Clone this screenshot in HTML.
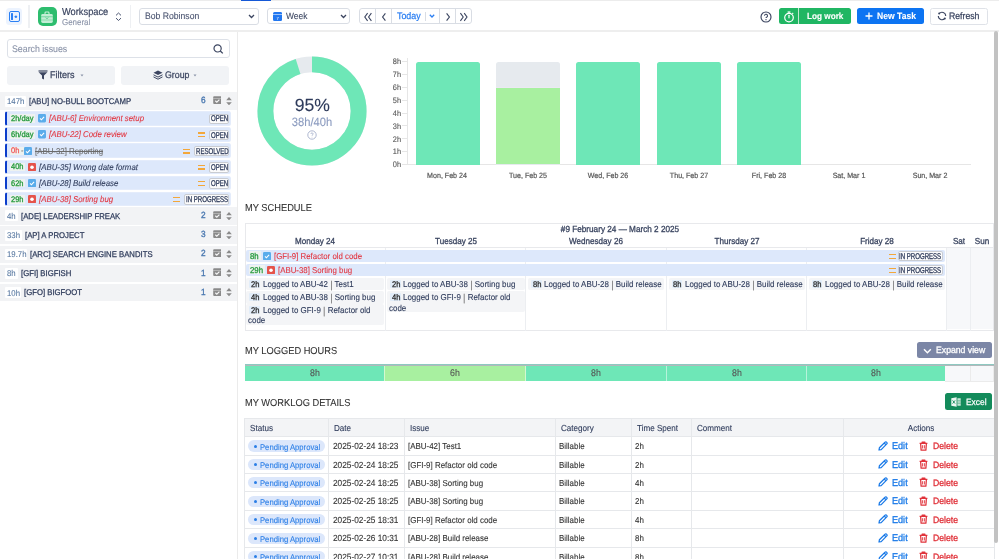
<!DOCTYPE html>
<html><head><meta charset="utf-8">
<style>
*{box-sizing:border-box;margin:0;padding:0}
html,body{width:999px;height:559px;overflow:hidden;background:#fff}
body{position:relative;font-family:"Liberation Sans",sans-serif;color:#333}
.a{position:absolute}
.t{position:absolute;white-space:nowrap;line-height:1;text-rendering:geometricPrecision;-webkit-text-stroke:0.1px currentColor}
svg{display:block}
#root{position:absolute;left:0;top:0;width:999px;height:559px;will-change:transform}
</style></head><body><div id="root">

<!-- HEADER -->
<div class="a" style="left:0.00px;top:0.00px;width:999.00px;height:1.00px;background:#ececec"></div>
<div class="a" style="left:241.00px;top:0.00px;width:30.00px;height:1.00px;background:#1558d6"></div>
<div class="a" style="left:0.00px;top:30.30px;width:999.00px;height:1.60px;background:#eeeeee"></div>
<div class="a" style="left:6.00px;top:8.00px;width:16.40px;height:16.60px;border-radius:3.5px;background:#ecf3fe"></div>
<div class="a" style="left:9.00px;top:10.90px;width:11.00px;height:11.20px;border:1.2px solid #2a80f4;border-radius:2px"></div>
<div class="a" style="left:10.90px;top:13.10px;width:1.90px;height:6.80px;background:#2a80f4;border-radius:0.5px"></div>
<svg class="a" style="left:13.80px;top:14.80px" width="4" height="3.6" viewBox="0 0 4 3.6"><path d="M0.2 1.8 L2 0.2 L3.4 1.8 L2 3.4Z" fill="#2a80f4"/></svg>
<div class="a" style="left:28.30px;top:4.80px;width:1.40px;height:23.40px;background:#eef0f3"></div>
<div class="a" style="left:37.50px;top:7.00px;width:19.30px;height:19.30px;border-radius:5px;background:#2dbd6e"></div>
<svg class="a" style="left:40.20px;top:9.70px" width="14" height="14" viewBox="0 0 14 14"><path d="M5 4 V2.9 a0.9 0.9 0 0 1 0.9 -0.9 h2.2 a0.9 0.9 0 0 1 0.9 0.9 V4" stroke="#c8f0d8" stroke-width="1.1" fill="none"/><rect x="1.2" y="4" width="11.6" height="8.9" rx="1.4" fill="#c2eed5"/><rect x="1.2" y="6.3" width="11.6" height="0.9" fill="#2dbd6e" opacity="0.55"/><rect x="1.2" y="9.6" width="11.6" height="0.8" fill="#2dbd6e" opacity="0.45"/><path d="M5.6 7.6 L7 8.7 L8.4 7.6" stroke="#2dbd6e" stroke-width="0.9" fill="none" opacity="0.7"/></svg>
<div class="t" style="left:62.00px;top:7.80px;font-size:10.044px;color:#3b4560;transform:scaleX(0.9259);transform-origin:0 0;-webkit-text-stroke:0.2px #3b4560">Workspace</div>
<div class="t" style="left:62.00px;top:17.60px;font-size:8.586px;color:#8a93a8;transform:scaleX(0.9259);transform-origin:0 0;">General</div>
<svg class="a" style="left:114.50px;top:12.00px" width="7" height="9.5" viewBox="0 0 7 9.5"><path d="M1 3.4 L3.5 1 L6 3.4 M1 6.1 L3.5 8.5 L6 6.1" stroke="#4a5470" stroke-width="1" fill="none"/></svg>
<div class="a" style="left:130.30px;top:4.80px;width:1.00px;height:23.40px;background:#eef0f3"></div>
<div class="a" style="left:139.20px;top:8.30px;width:119.40px;height:16.50px;border:1px solid #d9dde4;border-radius:3px"></div>
<div class="t" style="left:144.60px;top:12.20px;font-size:9.342px;color:#4a5470;transform:scaleX(0.9259);transform-origin:0 0;">Bob Robinson</div>
<svg class="a" style="left:247.50px;top:14.20px" width="7" height="5" viewBox="0 0 7 5"><path d="M1 1 L3.5 3.5 L6 1" stroke="#3b4560" stroke-width="1.3" fill="none"/></svg>
<div class="a" style="left:267.30px;top:8.10px;width:83.00px;height:16.20px;border:1px solid #d9dde4;border-radius:3px"></div>
<svg class="a" style="left:273.00px;top:12.30px" width="9.2" height="9" viewBox="0 0 9.2 9"><rect x="0" y="0" width="9.2" height="9" rx="1.5" fill="#2277f0"/><rect x="0" y="2.1" width="9.2" height="0.8" fill="#bcd6fb"/><text x="4.6" y="7.6" font-size="4.2" text-anchor="middle" fill="#fff" font-family="Liberation Sans">7</text></svg>
<div class="t" style="left:286.40px;top:12.40px;font-size:9.126px;color:#3b4560;transform:scaleX(0.9259);transform-origin:0 0;">Week</div>
<svg class="a" style="left:339.70px;top:14.20px" width="7" height="5" viewBox="0 0 7 5"><path d="M1 1 L3.5 3.5 L6 1" stroke="#3b4560" stroke-width="1.3" fill="none"/></svg>
<div class="a" style="left:359.10px;top:8.10px;width:112.80px;height:16.20px;border:1px solid #d9dde4;border-radius:3px"></div>
<div class="a" style="left:375.10px;top:8.10px;width:1.00px;height:16.20px;background:#d9dde4"></div>
<div class="a" style="left:391.20px;top:8.10px;width:1.00px;height:16.20px;background:#d9dde4"></div>
<div class="a" style="left:439.00px;top:8.10px;width:1.00px;height:16.20px;background:#d9dde4"></div>
<div class="a" style="left:454.90px;top:8.10px;width:1.00px;height:16.20px;background:#d9dde4"></div>
<div class="a" style="left:425.00px;top:11.50px;width:0.80px;height:9.50px;background:#d9dde4"></div>
<svg class="a" style="left:362.50px;top:11.50px" width="10" height="10" viewBox="0 0 10 10"><path d="M4.6 1.2 L1.8 5 L4.6 8.8 M8.4 1.2 L5.6 5 L8.4 8.8" stroke="#3b4560" stroke-width="1.1" fill="none"/></svg>
<svg class="a" style="left:379.80px;top:11.50px" width="8" height="10" viewBox="0 0 8 10"><path d="M5.4 1.3 L2.6 5 L5.4 8.7" stroke="#3b4560" stroke-width="1.15" fill="none"/></svg>
<div class="t" style="left:396.60px;top:12.40px;font-size:9.558px;color:#2a7ef2;transform:scaleX(0.9259);transform-origin:0 0;-webkit-text-stroke:0.25px #2a7ef2">Today</div>
<svg class="a" style="left:428.90px;top:14.30px" width="6" height="4" viewBox="0 0 6 4"><path d="M0.8 0.8 L3 3 L5.2 0.8" stroke="#2a7ef2" stroke-width="1.3" fill="none"/></svg>
<svg class="a" style="left:443.70px;top:11.50px" width="8" height="10" viewBox="0 0 8 10"><path d="M2.6 1.3 L5.4 5 L2.6 8.7" stroke="#3b4560" stroke-width="1.15" fill="none"/></svg>
<svg class="a" style="left:458.50px;top:11.50px" width="10" height="10" viewBox="0 0 10 10"><path d="M1.4 1.2 L4.2 5 L1.4 8.8 M5.2 1.2 L8 5 L5.2 8.8" stroke="#3b4560" stroke-width="1.1" fill="none"/></svg>
<svg class="a" style="left:759.80px;top:10.80px" width="12" height="12" viewBox="0 0 12 12"><circle cx="6" cy="6" r="5" stroke="#3b4560" stroke-width="1.15" fill="none"/><path d="M4.5 4.8 a1.5 1.5 0 1 1 2.1 1.35 c-0.45 0.2 -0.6 0.45 -0.6 0.95" stroke="#3b4560" stroke-width="1.05" fill="none"/><circle cx="6" cy="8.7" r="0.65" fill="#3b4560"/></svg>
<div class="a" style="left:779.10px;top:7.90px;width:71.90px;height:16.10px;border-radius:2.5px;background:#20b663"></div>
<div class="a" style="left:798.00px;top:7.90px;width:0.80px;height:16.10px;background:#bfe9cf"></div>
<svg class="a" style="left:782.60px;top:10.50px" width="12" height="12" viewBox="0 0 12 12"><circle cx="6" cy="6.6" r="4.3" stroke="#fff" stroke-width="1.2" fill="none"/><path d="M4.6 1 H7.4" stroke="#fff" stroke-width="1.2"/><path d="M6 1.2 V2.4" stroke="#fff" stroke-width="1.1"/><path d="M6 4.3 V6.8" stroke="#fff" stroke-width="1.2" stroke-linecap="round"/><path d="M9.3 2.9 L10.2 2" stroke="#fff" stroke-width="1.1"/></svg>
<div class="t" style="left:806.50px;top:11.60px;font-size:8.856px;color:#fff;transform:scaleX(0.9259);transform-origin:0 0;font-weight:bold">Log work</div>
<div class="a" style="left:857.20px;top:7.90px;width:66.40px;height:15.90px;border-radius:2.5px;background:#0d74f2"></div>
<svg class="a" style="left:865.40px;top:12.40px" width="8" height="8" viewBox="0 0 8 8"><path d="M4 0.5 V7.5 M0.5 4 H7.5" stroke="#fff" stroke-width="1.3"/></svg>
<div class="t" style="left:877.00px;top:11.60px;font-size:9.288px;color:#fff;transform:scaleX(0.9259);transform-origin:0 0;font-weight:bold">New Task</div>
<div class="a" style="left:930.20px;top:7.60px;width:58.30px;height:17.00px;border:1px solid #dfe2e8;border-radius:2.5px"></div>
<svg class="a" style="left:937.30px;top:10.90px" width="10" height="10" viewBox="0 0 10 10"><path d="M2.17 2.62 A3.7 3.7 0 0 1 8.70 5.00 M7.83 7.38 A3.7 3.7 0 0 1 1.30 5.00" stroke="#3b4560" stroke-width="1.1" fill="none"/><circle cx="2.17" cy="2.62" r="1" fill="#3b4560"/><circle cx="7.83" cy="7.38" r="1" fill="#3b4560"/></svg>
<div class="t" style="left:949.40px;top:11.40px;font-size:9.396px;color:#3b4560;transform:scaleX(0.9259);transform-origin:0 0;-webkit-text-stroke:0.25px #3b4560">Refresh</div>
<!-- SIDEBAR -->
<div class="a" style="left:237.00px;top:32.00px;width:1.00px;height:527.00px;background:#ebebeb"></div>
<div class="a" style="left:6.50px;top:38.50px;width:223.00px;height:19.00px;border:1px solid #dde1e8;border-radius:3px"></div>
<div class="t" style="left:12.00px;top:44.90px;font-size:9.504px;color:#8a93a8;transform:scaleX(0.9259);transform-origin:0 0;">Search issues</div>
<svg class="a" style="left:212.50px;top:43.50px" width="11" height="10" viewBox="0 0 11 10"><circle cx="4.6" cy="4.4" r="3.6" stroke="#3b4560" stroke-width="1.2" fill="none"/><path d="M7.3 7 L9.8 9.4" stroke="#3b4560" stroke-width="1.3"/></svg>
<div class="a" style="left:6.50px;top:65.50px;width:108.50px;height:19.00px;border-radius:3px;background:#f1f3f6"></div>
<div class="a" style="left:120.70px;top:65.50px;width:108.50px;height:19.00px;border-radius:3px;background:#f1f3f6"></div>
<svg class="a" style="left:38.00px;top:70.00px" width="10" height="10" viewBox="0 0 10 10"><path d="M0.5 0.4 H9.5 V1.6 H0.5Z" fill="#3b4560"/><path d="M0.6 2.2 H9.4 L6 5.4 V9.6 L4 8.6 V5.4Z" fill="#3b4560"/></svg>
<div class="t" style="left:50.00px;top:71.30px;font-size:9.72px;color:#3b4560;transform:scaleX(0.9259);transform-origin:0 0;-webkit-text-stroke:0.25px #3b4560">Filters</div>
<svg class="a" style="left:79.50px;top:74.00px" width="4" height="3" viewBox="0 0 4 3"><path d="M0.5 0.5 H3.5 L2 2.5Z" fill="#8a93a8"/></svg>
<svg class="a" style="left:153.00px;top:70.00px" width="10" height="10" viewBox="0 0 10 10"><path d="M5 0.5 L9.5 2.8 L5 5.1 L0.5 2.8Z" fill="#3b4560"/><path d="M0.5 4.8 L5 7.1 L9.5 4.8 M0.5 6.9 L5 9.2 L9.5 6.9" stroke="#3b4560" stroke-width="1" fill="none"/></svg>
<div class="t" style="left:165.00px;top:71.30px;font-size:9.504px;color:#3b4560;transform:scaleX(0.9259);transform-origin:0 0;-webkit-text-stroke:0.25px #3b4560">Group</div>
<svg class="a" style="left:192.50px;top:74.00px" width="4" height="3" viewBox="0 0 4 3"><path d="M0.5 0.5 H3.5 L2 2.5Z" fill="#8a93a8"/></svg>
<div class="a" style="left:0.00px;top:92.30px;width:237.00px;height:17.70px;background:#f2f3f5"></div>
<div class="a" style="left:5.00px;top:95.50px;width:20.50px;height:11.20px;background:#fff;border-radius:1px"></div>
<div class="t" style="left:7.00px;top:97.00px;font-size:8.424px;color:#5a7aa2;transform:scaleX(0.9259);transform-origin:0 0;">147h</div>
<div class="t" style="left:28.70px;top:96.90px;font-size:8.37px;color:#2d3a5a;transform:scaleX(0.9259);transform-origin:0 0;-webkit-text-stroke:0.25px #2d3a5a">[ABU] NO-BULL BOOTCAMP</div>
<div class="t" style="left:201.20px;top:96.20px;font-size:8.964px;color:#4a78b0;transform:scaleX(0.9259);transform-origin:0 0;-webkit-text-stroke:0.35px #4a78b0">6</div>
<svg class="a" style="left:212.60px;top:96.00px" width="8.6" height="8.2" viewBox="0 0 8.6 8.2"><rect x="0.2" y="0.2" width="8.2" height="7.8" rx="0.9" fill="#8a8a8a"/><rect x="0.2" y="2.1" width="8.2" height="0.5" fill="#d8d8d8"/><path d="M2.3 4.8 L3.8 6.2 L6.4 3.6" stroke="#f4f4f4" stroke-width="1.2" fill="none"/></svg>
<svg class="a" style="left:225.80px;top:96.70px" width="6" height="8.4" viewBox="0 0 6 8.4"><path d="M3 0.1 L5.8 3.2 H0.2Z M3 8.3 L5.8 5.2 H0.2Z" fill="#8a8a8a"/></svg>
<div class="a" style="left:4.60px;top:111.10px;width:226.20px;height:14.60px;background:#dde8fb;border-radius:2.5px;border:1px solid #e4ecfb;border-left:2.6px solid #0b3dcb"></div>
<div class="a" style="left:9.90px;top:114.30px;width:25.00px;height:8.60px;background:#eef2f0"></div>
<div class="t" style="left:11.40px;top:115.00px;font-size:8.1px;color:#22993a;transform:scaleX(0.9259);transform-origin:0 0;-webkit-text-stroke:0.3px #22993a">2h/day</div>
<svg class="a" style="left:37.70px;top:114.30px" width="8" height="8.4" viewBox="0 0 8 8.4"><rect x="0" y="0" width="8" height="8.4" rx="1.3" fill="#5aaceb"/><path d="M2 4.4 L3.4 5.8 L6.1 2.8" stroke="#fff" stroke-width="1.1" fill="none"/></svg>
<div class="t" style="left:48.80px;top:114.20px;font-size:8.478px;color:#e2343f;transform:scaleX(0.9259);transform-origin:0 0;font-style:italic">[ABU-6] Environment setup</div>
<div class="a" style="left:208.70px;top:113.50px;width:20.60px;height:10.70px;background:#fbfbfb;border:1px solid #c9ccd2;border-radius:2px"></div>
<div class="t" style="left:210.70px;top:114.40px;font-size:8.424px;color:#2d3a5a;transform:scaleX(0.7222);transform-origin:0 0;-webkit-text-stroke:0.3px #2d3a5a">OPEN</div>
<div class="a" style="left:4.60px;top:127.25px;width:226.20px;height:14.60px;background:#dde8fb;border-radius:2.5px;border:1px solid #e4ecfb;border-left:2.6px solid #0b3dcb"></div>
<div class="a" style="left:9.90px;top:130.45px;width:25.00px;height:8.60px;background:#eef2f0"></div>
<div class="t" style="left:11.40px;top:131.15px;font-size:8.1px;color:#22993a;transform:scaleX(0.9259);transform-origin:0 0;-webkit-text-stroke:0.3px #22993a">6h/day</div>
<svg class="a" style="left:37.70px;top:130.45px" width="8" height="8.4" viewBox="0 0 8 8.4"><rect x="0" y="0" width="8" height="8.4" rx="1.3" fill="#5aaceb"/><path d="M2 4.4 L3.4 5.8 L6.1 2.8" stroke="#fff" stroke-width="1.1" fill="none"/></svg>
<div class="t" style="left:48.80px;top:130.35px;font-size:8.478px;color:#e2343f;transform:scaleX(0.9259);transform-origin:0 0;font-style:italic">[ABU-22] Code review</div>
<div class="a" style="left:208.70px;top:129.65px;width:20.60px;height:10.70px;background:#fbfbfb;border:1px solid #c9ccd2;border-radius:2px"></div>
<div class="t" style="left:210.70px;top:130.55px;font-size:8.424px;color:#2d3a5a;transform:scaleX(0.7222);transform-origin:0 0;-webkit-text-stroke:0.3px #2d3a5a">OPEN</div>
<div class="a" style="left:197.70px;top:132.45px;width:7.00px;height:1.30px;background:#f3a73a"></div>
<div class="a" style="left:197.70px;top:136.15px;width:7.00px;height:1.30px;background:#f3a73a"></div>
<div class="a" style="left:4.60px;top:143.40px;width:226.20px;height:14.60px;background:#dde8fb;border-radius:2.5px;border:1px solid #e4ecfb;border-left:2.6px solid #0b3dcb"></div>
<div class="a" style="left:9.90px;top:146.60px;width:14.80px;height:8.60px;background:#eef2f0"></div>
<div class="t" style="left:11.40px;top:147.30px;font-size:8.1px;color:#f25656;transform:scaleX(0.9259);transform-origin:0 0;-webkit-text-stroke:0.3px #f25656">0h</div>
<div class="t" style="left:21.00px;top:147.30px;font-size:8.1px;color:#777;transform:scaleX(0.9259);transform-origin:0 0;">-</div>
<svg class="a" style="left:24.40px;top:146.60px" width="8" height="8.4" viewBox="0 0 8 8.4"><rect x="0" y="0" width="8" height="8.4" rx="1.3" fill="#5aaceb"/><path d="M2 4.4 L3.4 5.8 L6.1 2.8" stroke="#fff" stroke-width="1.1" fill="none"/></svg>
<div class="t" style="left:35.00px;top:146.50px;font-size:8.478px;color:#6b6b6b;transform:scaleX(0.9259);transform-origin:0 0;text-decoration:line-through">[ABU-32] Reporting</div>
<div class="a" style="left:193.60px;top:145.80px;width:35.70px;height:10.70px;background:#fbfbfb;border:1px solid #c9ccd2;border-radius:2px"></div>
<div class="t" style="left:195.60px;top:146.70px;font-size:8.424px;color:#2d3a5a;transform:scaleX(0.7222);transform-origin:0 0;-webkit-text-stroke:0.3px #2d3a5a">RESOLVED</div>
<div class="a" style="left:182.60px;top:148.60px;width:7.00px;height:1.30px;background:#f3a73a"></div>
<div class="a" style="left:182.60px;top:152.30px;width:7.00px;height:1.30px;background:#f3a73a"></div>
<div class="a" style="left:4.60px;top:159.55px;width:226.20px;height:14.60px;background:#dde8fb;border-radius:2.5px;border:1px solid #e4ecfb;border-left:2.6px solid #0b3dcb"></div>
<div class="a" style="left:9.90px;top:162.75px;width:15.20px;height:8.60px;background:#eef2f0"></div>
<div class="t" style="left:11.40px;top:163.45px;font-size:8.1px;color:#22993a;transform:scaleX(0.9259);transform-origin:0 0;-webkit-text-stroke:0.3px #22993a">40h</div>
<svg class="a" style="left:28.10px;top:162.75px" width="8" height="8.4" viewBox="0 0 8 8.4"><rect x="0" y="0" width="8" height="8.4" rx="1.3" fill="#e5534b"/><circle cx="4" cy="4.2" r="1.8" fill="#fff"/></svg>
<div class="t" style="left:39.20px;top:162.65px;font-size:8.478px;color:#2d3a5a;transform:scaleX(0.9259);transform-origin:0 0;font-style:italic">[ABU-35] Wrong date format</div>
<div class="a" style="left:208.70px;top:161.95px;width:20.60px;height:10.70px;background:#fbfbfb;border:1px solid #c9ccd2;border-radius:2px"></div>
<div class="t" style="left:210.70px;top:162.85px;font-size:8.424px;color:#2d3a5a;transform:scaleX(0.7222);transform-origin:0 0;-webkit-text-stroke:0.3px #2d3a5a">OPEN</div>
<div class="a" style="left:197.70px;top:164.75px;width:7.00px;height:1.30px;background:#f3a73a"></div>
<div class="a" style="left:197.70px;top:168.45px;width:7.00px;height:1.30px;background:#f3a73a"></div>
<div class="a" style="left:4.60px;top:175.70px;width:226.20px;height:14.60px;background:#dde8fb;border-radius:2.5px;border:1px solid #e4ecfb;border-left:2.6px solid #0b3dcb"></div>
<div class="a" style="left:9.90px;top:178.90px;width:15.20px;height:8.60px;background:#eef2f0"></div>
<div class="t" style="left:11.40px;top:179.60px;font-size:8.1px;color:#22993a;transform:scaleX(0.9259);transform-origin:0 0;-webkit-text-stroke:0.3px #22993a">62h</div>
<svg class="a" style="left:28.10px;top:178.90px" width="8" height="8.4" viewBox="0 0 8 8.4"><rect x="0" y="0" width="8" height="8.4" rx="1.3" fill="#5aaceb"/><path d="M2 4.4 L3.4 5.8 L6.1 2.8" stroke="#fff" stroke-width="1.1" fill="none"/></svg>
<div class="t" style="left:39.20px;top:178.80px;font-size:8.478px;color:#2d3a5a;transform:scaleX(0.9259);transform-origin:0 0;font-style:italic">[ABU-28] Build release</div>
<div class="a" style="left:208.70px;top:178.10px;width:20.60px;height:10.70px;background:#fbfbfb;border:1px solid #c9ccd2;border-radius:2px"></div>
<div class="t" style="left:210.70px;top:179.00px;font-size:8.424px;color:#2d3a5a;transform:scaleX(0.7222);transform-origin:0 0;-webkit-text-stroke:0.3px #2d3a5a">OPEN</div>
<div class="a" style="left:197.70px;top:180.90px;width:7.00px;height:1.30px;background:#f3a73a"></div>
<div class="a" style="left:197.70px;top:184.60px;width:7.00px;height:1.30px;background:#f3a73a"></div>
<div class="a" style="left:4.60px;top:191.85px;width:226.20px;height:14.60px;background:#dde8fb;border-radius:2.5px;border:1px solid #e4ecfb;border-left:2.6px solid #0b3dcb"></div>
<div class="a" style="left:9.90px;top:195.05px;width:15.20px;height:8.60px;background:#eef2f0"></div>
<div class="t" style="left:11.40px;top:195.75px;font-size:8.1px;color:#22993a;transform:scaleX(0.9259);transform-origin:0 0;-webkit-text-stroke:0.3px #22993a">29h</div>
<svg class="a" style="left:28.10px;top:195.05px" width="8" height="8.4" viewBox="0 0 8 8.4"><rect x="0" y="0" width="8" height="8.4" rx="1.3" fill="#e5534b"/><circle cx="4" cy="4.2" r="1.8" fill="#fff"/></svg>
<div class="t" style="left:39.20px;top:194.95px;font-size:8.478px;color:#e2343f;transform:scaleX(0.9259);transform-origin:0 0;font-style:italic">[ABU-38] Sorting bug</div>
<div class="a" style="left:184.40px;top:194.25px;width:44.90px;height:10.70px;background:#fbfbfb;border:1px solid #c9ccd2;border-radius:2px"></div>
<div class="t" style="left:186.40px;top:195.15px;font-size:8.424px;color:#2d3a5a;transform:scaleX(0.7222);transform-origin:0 0;-webkit-text-stroke:0.3px #2d3a5a">IN PROGRESS</div>
<div class="a" style="left:173.40px;top:197.05px;width:7.00px;height:1.30px;background:#f3a73a"></div>
<div class="a" style="left:173.40px;top:200.75px;width:7.00px;height:1.30px;background:#f3a73a"></div>
<div class="a" style="left:0.00px;top:207.20px;width:237.00px;height:17.50px;background:#f2f3f5"></div>
<div class="a" style="left:5.00px;top:210.40px;width:13.00px;height:11.00px;background:#fff;border-radius:1px"></div>
<div class="t" style="left:7.00px;top:211.90px;font-size:8.424px;color:#5a7aa2;transform:scaleX(0.9259);transform-origin:0 0;">4h</div>
<div class="t" style="left:21.20px;top:211.80px;font-size:8.37px;color:#2d3a5a;transform:scaleX(0.9259);transform-origin:0 0;-webkit-text-stroke:0.25px #2d3a5a">[ADE] LEADERSHIP FREAK</div>
<div class="t" style="left:201.20px;top:211.10px;font-size:8.964px;color:#4a78b0;transform:scaleX(0.9259);transform-origin:0 0;-webkit-text-stroke:0.35px #4a78b0">2</div>
<svg class="a" style="left:212.60px;top:210.90px" width="8.6" height="8.2" viewBox="0 0 8.6 8.2"><rect x="0.2" y="0.2" width="8.2" height="7.8" rx="0.9" fill="#8a8a8a"/><rect x="0.2" y="2.1" width="8.2" height="0.5" fill="#d8d8d8"/><path d="M2.3 4.8 L3.8 6.2 L6.4 3.6" stroke="#f4f4f4" stroke-width="1.2" fill="none"/></svg>
<svg class="a" style="left:225.80px;top:211.60px" width="6" height="8.4" viewBox="0 0 6 8.4"><path d="M3 0.1 L5.8 3.2 H0.2Z M3 8.3 L5.8 5.2 H0.2Z" fill="#8a8a8a"/></svg>
<div class="a" style="left:0.00px;top:226.35px;width:237.00px;height:17.50px;background:#f2f3f5"></div>
<div class="a" style="left:5.00px;top:229.55px;width:16.50px;height:11.00px;background:#fff;border-radius:1px"></div>
<div class="t" style="left:7.00px;top:231.05px;font-size:8.424px;color:#5a7aa2;transform:scaleX(0.9259);transform-origin:0 0;">33h</div>
<div class="t" style="left:24.70px;top:230.95px;font-size:8.37px;color:#2d3a5a;transform:scaleX(0.9259);transform-origin:0 0;-webkit-text-stroke:0.25px #2d3a5a">[AP] A PROJECT</div>
<div class="t" style="left:201.20px;top:230.25px;font-size:8.964px;color:#4a78b0;transform:scaleX(0.9259);transform-origin:0 0;-webkit-text-stroke:0.35px #4a78b0">3</div>
<svg class="a" style="left:212.60px;top:230.05px" width="8.6" height="8.2" viewBox="0 0 8.6 8.2"><rect x="0.2" y="0.2" width="8.2" height="7.8" rx="0.9" fill="#8a8a8a"/><rect x="0.2" y="2.1" width="8.2" height="0.5" fill="#d8d8d8"/><path d="M2.3 4.8 L3.8 6.2 L6.4 3.6" stroke="#f4f4f4" stroke-width="1.2" fill="none"/></svg>
<svg class="a" style="left:225.80px;top:230.75px" width="6" height="8.4" viewBox="0 0 6 8.4"><path d="M3 0.1 L5.8 3.2 H0.2Z M3 8.3 L5.8 5.2 H0.2Z" fill="#8a8a8a"/></svg>
<div class="a" style="left:0.00px;top:245.50px;width:237.00px;height:17.50px;background:#f2f3f5"></div>
<div class="a" style="left:5.00px;top:248.70px;width:22.10px;height:11.00px;background:#fff;border-radius:1px"></div>
<div class="t" style="left:7.00px;top:250.20px;font-size:8.424px;color:#5a7aa2;transform:scaleX(0.9259);transform-origin:0 0;">19.7h</div>
<div class="t" style="left:30.30px;top:250.10px;font-size:8.37px;color:#2d3a5a;transform:scaleX(0.9259);transform-origin:0 0;-webkit-text-stroke:0.25px #2d3a5a">[ARC] SEARCH ENGINE BANDITS</div>
<div class="t" style="left:201.20px;top:249.40px;font-size:8.964px;color:#4a78b0;transform:scaleX(0.9259);transform-origin:0 0;-webkit-text-stroke:0.35px #4a78b0">2</div>
<svg class="a" style="left:212.60px;top:249.20px" width="8.6" height="8.2" viewBox="0 0 8.6 8.2"><rect x="0.2" y="0.2" width="8.2" height="7.8" rx="0.9" fill="#8a8a8a"/><rect x="0.2" y="2.1" width="8.2" height="0.5" fill="#d8d8d8"/><path d="M2.3 4.8 L3.8 6.2 L6.4 3.6" stroke="#f4f4f4" stroke-width="1.2" fill="none"/></svg>
<svg class="a" style="left:225.80px;top:249.90px" width="6" height="8.4" viewBox="0 0 6 8.4"><path d="M3 0.1 L5.8 3.2 H0.2Z M3 8.3 L5.8 5.2 H0.2Z" fill="#8a8a8a"/></svg>
<div class="a" style="left:0.00px;top:264.65px;width:237.00px;height:17.50px;background:#f2f3f5"></div>
<div class="a" style="left:5.00px;top:267.85px;width:13.00px;height:11.00px;background:#fff;border-radius:1px"></div>
<div class="t" style="left:7.00px;top:269.35px;font-size:8.424px;color:#5a7aa2;transform:scaleX(0.9259);transform-origin:0 0;">8h</div>
<div class="t" style="left:21.20px;top:269.25px;font-size:8.37px;color:#2d3a5a;transform:scaleX(0.9259);transform-origin:0 0;-webkit-text-stroke:0.25px #2d3a5a">[GFI] BIGFISH</div>
<div class="t" style="left:201.20px;top:268.55px;font-size:8.964px;color:#4a78b0;transform:scaleX(0.9259);transform-origin:0 0;-webkit-text-stroke:0.35px #4a78b0">1</div>
<svg class="a" style="left:212.60px;top:268.35px" width="8.6" height="8.2" viewBox="0 0 8.6 8.2"><rect x="0.2" y="0.2" width="8.2" height="7.8" rx="0.9" fill="#8a8a8a"/><rect x="0.2" y="2.1" width="8.2" height="0.5" fill="#d8d8d8"/><path d="M2.3 4.8 L3.8 6.2 L6.4 3.6" stroke="#f4f4f4" stroke-width="1.2" fill="none"/></svg>
<svg class="a" style="left:225.80px;top:269.05px" width="6" height="8.4" viewBox="0 0 6 8.4"><path d="M3 0.1 L5.8 3.2 H0.2Z M3 8.3 L5.8 5.2 H0.2Z" fill="#8a8a8a"/></svg>
<div class="a" style="left:0.00px;top:283.80px;width:237.00px;height:17.50px;background:#f2f3f5"></div>
<div class="a" style="left:5.00px;top:287.00px;width:15.50px;height:11.00px;background:#fff;border-radius:1px"></div>
<div class="t" style="left:7.00px;top:288.50px;font-size:8.424px;color:#5a7aa2;transform:scaleX(0.9259);transform-origin:0 0;">10h</div>
<div class="t" style="left:23.70px;top:288.40px;font-size:8.37px;color:#2d3a5a;transform:scaleX(0.9259);transform-origin:0 0;-webkit-text-stroke:0.25px #2d3a5a">[GFO] BIGFOOT</div>
<div class="t" style="left:201.20px;top:287.70px;font-size:8.964px;color:#4a78b0;transform:scaleX(0.9259);transform-origin:0 0;-webkit-text-stroke:0.35px #4a78b0">1</div>
<svg class="a" style="left:212.60px;top:287.50px" width="8.6" height="8.2" viewBox="0 0 8.6 8.2"><rect x="0.2" y="0.2" width="8.2" height="7.8" rx="0.9" fill="#8a8a8a"/><rect x="0.2" y="2.1" width="8.2" height="0.5" fill="#d8d8d8"/><path d="M2.3 4.8 L3.8 6.2 L6.4 3.6" stroke="#f4f4f4" stroke-width="1.2" fill="none"/></svg>
<svg class="a" style="left:225.80px;top:288.20px" width="6" height="8.4" viewBox="0 0 6 8.4"><path d="M3 0.1 L5.8 3.2 H0.2Z M3 8.3 L5.8 5.2 H0.2Z" fill="#8a8a8a"/></svg>
<!-- MAIN -->
<svg class="a" style="left:252.4px;top:51.4px" width="120" height="120" viewBox="0 0 120 120"><circle cx="60" cy="60" r="46.6" fill="none" stroke="#e6eaee" stroke-width="15.9"/><circle cx="60" cy="60" r="46.6" fill="none" stroke="#6ee7b7" stroke-width="15.9" stroke-dasharray="278.16 292.80" transform="rotate(-90 60 60)"/></svg>
<div class="t" style="left:112.40px;width:400px;text-align:center;top:97.30px;font-size:17.6px;color:#2d3a5a;">95%</div>
<div class="t" style="left:112.40px;width:400px;text-align:center;top:115.60px;font-size:12.096px;color:#8b9bbf;transform:scaleX(0.9259);transform-origin:50% 0;">38h/40h</div>
<svg class="a" style="left:307.4px;top:129.9px" width="10" height="10" viewBox="0 0 10 10"><circle cx="5" cy="5" r="4.2" stroke="#9aa6c4" stroke-width="0.8" fill="none"/><path d="M3.9 4 a1.1 1.1 0 1 1 1.5 1 c-0.3 0.15 -0.4 0.3 -0.4 0.7" stroke="#9aa6c4" stroke-width="0.75" fill="none"/><circle cx="5" cy="7.1" r="0.45" fill="#9aa6c4"/></svg>
<div class="t" style="left:0.80px;width:400px;text-align:right;top:161.20px;font-size:7.992px;color:#555;transform:scaleX(0.9259);transform-origin:100% 0;">0h</div>
<div class="a" style="left:402.00px;top:164.00px;width:5.00px;height:1.00px;background:#e6e6e6"></div>
<div class="t" style="left:0.80px;width:400px;text-align:right;top:148.36px;font-size:7.992px;color:#555;transform:scaleX(0.9259);transform-origin:100% 0;">1h</div>
<div class="a" style="left:402.00px;top:151.16px;width:5.00px;height:1.00px;background:#e6e6e6"></div>
<div class="t" style="left:0.80px;width:400px;text-align:right;top:135.52px;font-size:7.992px;color:#555;transform:scaleX(0.9259);transform-origin:100% 0;">2h</div>
<div class="a" style="left:402.00px;top:138.32px;width:5.00px;height:1.00px;background:#e6e6e6"></div>
<div class="t" style="left:0.80px;width:400px;text-align:right;top:122.68px;font-size:7.992px;color:#555;transform:scaleX(0.9259);transform-origin:100% 0;">3h</div>
<div class="a" style="left:402.00px;top:125.48px;width:5.00px;height:1.00px;background:#e6e6e6"></div>
<div class="t" style="left:0.80px;width:400px;text-align:right;top:109.84px;font-size:7.992px;color:#555;transform:scaleX(0.9259);transform-origin:100% 0;">4h</div>
<div class="a" style="left:402.00px;top:112.64px;width:5.00px;height:1.00px;background:#e6e6e6"></div>
<div class="t" style="left:0.80px;width:400px;text-align:right;top:97.00px;font-size:7.992px;color:#555;transform:scaleX(0.9259);transform-origin:100% 0;">5h</div>
<div class="a" style="left:402.00px;top:99.80px;width:5.00px;height:1.00px;background:#e6e6e6"></div>
<div class="t" style="left:0.80px;width:400px;text-align:right;top:84.16px;font-size:7.992px;color:#555;transform:scaleX(0.9259);transform-origin:100% 0;">6h</div>
<div class="a" style="left:402.00px;top:86.96px;width:5.00px;height:1.00px;background:#e6e6e6"></div>
<div class="t" style="left:0.80px;width:400px;text-align:right;top:71.32px;font-size:7.992px;color:#555;transform:scaleX(0.9259);transform-origin:100% 0;">7h</div>
<div class="a" style="left:402.00px;top:74.12px;width:5.00px;height:1.00px;background:#e6e6e6"></div>
<div class="t" style="left:0.80px;width:400px;text-align:right;top:58.48px;font-size:7.992px;color:#555;transform:scaleX(0.9259);transform-origin:100% 0;">8h</div>
<div class="a" style="left:402.00px;top:61.28px;width:5.00px;height:1.00px;background:#e6e6e6"></div>
<div class="a" style="left:407.00px;top:58.00px;width:1.00px;height:107.00px;background:#e6e6e6"></div>
<div class="a" style="left:407.00px;top:164.00px;width:563.50px;height:1.00px;background:#e6e6e6"></div>
<div class="t" style="left:247.22px;width:400px;text-align:center;top:171.60px;font-size:7.668px;color:#555;transform:scaleX(0.9259);transform-origin:50% 0;-webkit-text-stroke:0.2px #555">Mon, Feb 24</div>
<div class="a" style="left:415.60px;top:61.50px;width:64.00px;height:103.00px;background:#6ee7b7;border-radius:2.5px 2.5px 0 0"></div>
<div class="t" style="left:327.64px;width:400px;text-align:center;top:171.60px;font-size:7.668px;color:#555;transform:scaleX(0.9259);transform-origin:50% 0;-webkit-text-stroke:0.2px #555">Tue, Feb 25</div>
<div class="a" style="left:496.03px;top:61.50px;width:64.00px;height:103.00px;background:#e6eaee;border-radius:2.5px 2.5px 0 0"></div>
<div class="a" style="left:496.03px;top:87.46px;width:64.00px;height:77.04px;background:#a8f0a0"></div>
<div class="a" style="left:496.03px;top:86.66px;width:64.00px;height:0.80px;background:#ece9f3"></div>
<div class="t" style="left:408.08px;width:400px;text-align:center;top:171.60px;font-size:7.668px;color:#555;transform:scaleX(0.9259);transform-origin:50% 0;-webkit-text-stroke:0.2px #555">Wed, Feb 26</div>
<div class="a" style="left:576.46px;top:61.50px;width:64.00px;height:103.00px;background:#6ee7b7;border-radius:2.5px 2.5px 0 0"></div>
<div class="t" style="left:488.50px;width:400px;text-align:center;top:171.60px;font-size:7.668px;color:#555;transform:scaleX(0.9259);transform-origin:50% 0;-webkit-text-stroke:0.2px #555">Thu, Feb 27</div>
<div class="a" style="left:656.89px;top:61.50px;width:64.00px;height:103.00px;background:#6ee7b7;border-radius:2.5px 2.5px 0 0"></div>
<div class="t" style="left:568.94px;width:400px;text-align:center;top:171.60px;font-size:7.668px;color:#555;transform:scaleX(0.9259);transform-origin:50% 0;-webkit-text-stroke:0.2px #555">Fri, Feb 28</div>
<div class="a" style="left:737.32px;top:61.50px;width:64.00px;height:103.00px;background:#6ee7b7;border-radius:2.5px 2.5px 0 0"></div>
<div class="t" style="left:649.37px;width:400px;text-align:center;top:171.60px;font-size:7.668px;color:#555;transform:scaleX(0.9259);transform-origin:50% 0;-webkit-text-stroke:0.2px #555">Sat, Mar 1</div>
<div class="t" style="left:729.80px;width:400px;text-align:center;top:171.60px;font-size:7.668px;color:#555;transform:scaleX(0.9259);transform-origin:50% 0;-webkit-text-stroke:0.2px #555">Sun, Mar 2</div>
<div class="t" style="left:245.00px;top:203.50px;font-size:10.044px;color:#333;transform:scaleX(0.9259);transform-origin:0 0;">MY SCHEDULE</div>
<div class="a" style="left:244.50px;top:223.00px;width:749.50px;height:108.00px;border:1px solid #e8e9ec"></div>
<div class="a" style="left:946.70px;top:247.50px;width:46.30px;height:81.70px;background:#f7f8fa"></div>
<div class="a" style="left:244.50px;top:247.30px;width:749.50px;height:1.00px;background:#e8e9ec"></div>
<div class="a" style="left:384.80px;top:247.50px;width:1.00px;height:83.50px;background:#eceef1"></div>
<div class="a" style="left:525.30px;top:247.50px;width:1.00px;height:83.50px;background:#eceef1"></div>
<div class="a" style="left:665.90px;top:247.50px;width:1.00px;height:83.50px;background:#eceef1"></div>
<div class="a" style="left:806.20px;top:247.50px;width:1.00px;height:83.50px;background:#eceef1"></div>
<div class="a" style="left:946.20px;top:247.50px;width:1.00px;height:83.50px;background:#eceef1"></div>
<div class="a" style="left:969.90px;top:247.50px;width:1.00px;height:83.50px;background:#eceef1"></div>
<div class="t" style="left:419.50px;width:400px;text-align:center;top:225.20px;font-size:8.856px;color:#3a4560;transform:scaleX(0.9259);transform-origin:50% 0;-webkit-text-stroke:0.3px #3a4560">#9 February 24 — March 2 2025</div>
<div class="t" style="left:114.90px;width:400px;text-align:center;top:237.30px;font-size:8.748px;color:#3a4560;transform:scaleX(0.9259);transform-origin:50% 0;-webkit-text-stroke:0.3px #3a4560">Monday 24</div>
<div class="t" style="left:255.55px;width:400px;text-align:center;top:237.30px;font-size:8.748px;color:#3a4560;transform:scaleX(0.9259);transform-origin:50% 0;-webkit-text-stroke:0.3px #3a4560">Tuesday 25</div>
<div class="t" style="left:396.10px;width:400px;text-align:center;top:237.30px;font-size:8.748px;color:#3a4560;transform:scaleX(0.9259);transform-origin:50% 0;-webkit-text-stroke:0.3px #3a4560">Wednesday 26</div>
<div class="t" style="left:536.55px;width:400px;text-align:center;top:237.30px;font-size:8.748px;color:#3a4560;transform:scaleX(0.9259);transform-origin:50% 0;-webkit-text-stroke:0.3px #3a4560">Thursday 27</div>
<div class="t" style="left:676.70px;width:400px;text-align:center;top:237.30px;font-size:8.748px;color:#3a4560;transform:scaleX(0.9259);transform-origin:50% 0;-webkit-text-stroke:0.3px #3a4560">Friday 28</div>
<div class="t" style="left:758.55px;width:400px;text-align:center;top:237.30px;font-size:8.748px;color:#3a4560;transform:scaleX(0.9259);transform-origin:50% 0;-webkit-text-stroke:0.3px #3a4560">Sat</div>
<div class="t" style="left:782.20px;width:400px;text-align:center;top:237.30px;font-size:8.748px;color:#3a4560;transform:scaleX(0.9259);transform-origin:50% 0;-webkit-text-stroke:0.3px #3a4560">Sun</div>
<div class="a" style="left:246.30px;top:249.80px;width:698.30px;height:12.00px;background:#dde8fb;border-radius:2px"></div>
<div class="a" style="left:248.80px;top:251.40px;width:11.80px;height:9.00px;background:#eef2f0"></div>
<div class="t" style="left:250.20px;top:252.20px;font-size:8.424px;color:#22993a;transform:scaleX(0.9259);transform-origin:0 0;-webkit-text-stroke:0.3px #22993a">8h</div>
<svg class="a" style="left:262.8px;top:251.70px" width="8" height="8.4" viewBox="0 0 8 8.4"><rect x="0" y="0" width="8" height="8.4" rx="1.3" fill="#5aaceb"/><path d="M2 4.4 L3.4 5.8 L6.1 2.8" stroke="#fff" stroke-width="1.1" fill="none"/></svg>
<div class="t" style="left:273.60px;top:252.20px;font-size:8.478px;color:#e2343f;transform:scaleX(0.9259);transform-origin:0 0;">[GFI-9] Refactor old code</div>
<div class="a" style="left:897.50px;top:251.00px;width:45.30px;height:10.40px;background:#fbfbfb;border:1px solid #c9ccd2;border-radius:2px"></div>
<div class="t" style="left:899.30px;top:251.80px;font-size:8.424px;color:#2d3a5a;transform:scaleX(0.7222);transform-origin:0 0;-webkit-text-stroke:0.3px #2d3a5a">IN PROGRESS</div>
<div class="a" style="left:888.90px;top:253.80px;width:7.00px;height:1.30px;background:#f3a73a"></div>
<div class="a" style="left:888.90px;top:257.50px;width:7.00px;height:1.30px;background:#f3a73a"></div>
<div class="a" style="left:246.30px;top:263.80px;width:698.30px;height:12.00px;background:#dde8fb;border-radius:2px"></div>
<div class="a" style="left:248.80px;top:265.40px;width:15.80px;height:9.00px;background:#eef2f0"></div>
<div class="t" style="left:250.20px;top:266.20px;font-size:8.424px;color:#22993a;transform:scaleX(0.9259);transform-origin:0 0;-webkit-text-stroke:0.3px #22993a">29h</div>
<svg class="a" style="left:266.8px;top:265.70px" width="8" height="8.4" viewBox="0 0 8 8.4"><rect x="0" y="0" width="8" height="8.4" rx="1.3" fill="#e5534b"/><circle cx="4" cy="4.2" r="1.8" fill="#fff"/></svg>
<div class="t" style="left:277.60px;top:266.20px;font-size:8.478px;color:#e2343f;transform:scaleX(0.9259);transform-origin:0 0;">[ABU-38] Sorting bug</div>
<div class="a" style="left:897.50px;top:265.00px;width:45.30px;height:10.40px;background:#fbfbfb;border:1px solid #c9ccd2;border-radius:2px"></div>
<div class="t" style="left:899.30px;top:265.80px;font-size:8.424px;color:#2d3a5a;transform:scaleX(0.7222);transform-origin:0 0;-webkit-text-stroke:0.3px #2d3a5a">IN PROGRESS</div>
<div class="a" style="left:888.90px;top:267.80px;width:7.00px;height:1.30px;background:#f3a73a"></div>
<div class="a" style="left:888.90px;top:271.50px;width:7.00px;height:1.30px;background:#f3a73a"></div>
<div class="a" style="left:246.30px;top:278.20px;width:137.70px;height:12.30px;background:#f4f5f7;border-radius:2px"></div>
<div class="a" style="left:249.30px;top:279.50px;width:10.60px;height:8.10px;background:#e2edf9;border-radius:1px"></div>
<div class="t" style="left:250.70px;top:280.50px;font-size:8.208px;color:#222;transform:scaleX(0.9259);transform-origin:0 0;-webkit-text-stroke:0.25px #222">2h</div>
<div class="t" style="left:262.50px;top:280.00px;font-size:8.586px;color:#2d3a5a;transform:scaleX(0.9259);transform-origin:0 0;">Logged to ABU-42 <span style="color:#777;font-size:10px;line-height:0;position:relative;top:0.8px">|</span> Test1</div>
<div class="a" style="left:246.30px;top:291.40px;width:137.70px;height:12.30px;background:#f4f5f7;border-radius:2px"></div>
<div class="a" style="left:249.30px;top:292.70px;width:10.60px;height:8.10px;background:#e2edf9;border-radius:1px"></div>
<div class="t" style="left:250.70px;top:293.70px;font-size:8.208px;color:#222;transform:scaleX(0.9259);transform-origin:0 0;-webkit-text-stroke:0.25px #222">4h</div>
<div class="t" style="left:262.50px;top:293.20px;font-size:8.586px;color:#2d3a5a;transform:scaleX(0.9259);transform-origin:0 0;">Logged to ABU-38 <span style="color:#777;font-size:10px;line-height:0;position:relative;top:0.8px">|</span> Sorting bug</div>
<div class="a" style="left:246.30px;top:304.30px;width:137.70px;height:21.00px;background:#f4f5f7;border-radius:2px"></div>
<div class="a" style="left:249.30px;top:305.60px;width:10.60px;height:8.10px;background:#e2edf9;border-radius:1px"></div>
<div class="t" style="left:250.70px;top:306.60px;font-size:8.208px;color:#222;transform:scaleX(0.9259);transform-origin:0 0;-webkit-text-stroke:0.25px #222">2h</div>
<div class="t" style="left:262.50px;top:306.10px;font-size:8.586px;color:#2d3a5a;transform:scaleX(0.9259);transform-origin:0 0;">Logged to GFI-9 <span style="color:#777;font-size:10px;line-height:0;position:relative;top:0.8px">|</span> Refactor old</div>
<div class="t" style="left:247.60px;top:316.40px;font-size:8.586px;color:#2d3a5a;transform:scaleX(0.9259);transform-origin:0 0;">code</div>
<div class="a" style="left:387.20px;top:278.20px;width:137.70px;height:12.30px;background:#f4f5f7;border-radius:2px"></div>
<div class="a" style="left:390.20px;top:279.50px;width:10.60px;height:8.10px;background:#e2edf9;border-radius:1px"></div>
<div class="t" style="left:391.60px;top:280.50px;font-size:8.208px;color:#222;transform:scaleX(0.9259);transform-origin:0 0;-webkit-text-stroke:0.25px #222">2h</div>
<div class="t" style="left:403.40px;top:280.00px;font-size:8.586px;color:#2d3a5a;transform:scaleX(0.9259);transform-origin:0 0;">Logged to ABU-38 <span style="color:#777;font-size:10px;line-height:0;position:relative;top:0.8px">|</span> Sorting bug</div>
<div class="a" style="left:387.20px;top:291.40px;width:137.70px;height:21.00px;background:#f4f5f7;border-radius:2px"></div>
<div class="a" style="left:390.20px;top:292.70px;width:10.60px;height:8.10px;background:#e2edf9;border-radius:1px"></div>
<div class="t" style="left:391.60px;top:293.70px;font-size:8.208px;color:#222;transform:scaleX(0.9259);transform-origin:0 0;-webkit-text-stroke:0.25px #222">4h</div>
<div class="t" style="left:403.40px;top:293.20px;font-size:8.586px;color:#2d3a5a;transform:scaleX(0.9259);transform-origin:0 0;">Logged to GFI-9 <span style="color:#777;font-size:10px;line-height:0;position:relative;top:0.8px">|</span> Refactor old</div>
<div class="t" style="left:388.50px;top:303.50px;font-size:8.586px;color:#2d3a5a;transform:scaleX(0.9259);transform-origin:0 0;">code</div>
<div class="a" style="left:528.20px;top:278.20px;width:136.00px;height:12.30px;background:#f4f5f7;border-radius:2px"></div>
<div class="a" style="left:531.20px;top:279.50px;width:10.60px;height:8.10px;background:#e2edf9;border-radius:1px"></div>
<div class="t" style="left:532.60px;top:280.50px;font-size:8.208px;color:#222;transform:scaleX(0.9259);transform-origin:0 0;-webkit-text-stroke:0.25px #222">8h</div>
<div class="t" style="left:544.40px;top:280.00px;font-size:8.586px;color:#2d3a5a;transform:scaleX(0.9259);transform-origin:0 0;">Logged to ABU-28 <span style="color:#777;font-size:10px;line-height:0;position:relative;top:0.8px">|</span> Build release</div>
<div class="a" style="left:668.60px;top:278.20px;width:136.00px;height:12.30px;background:#f4f5f7;border-radius:2px"></div>
<div class="a" style="left:671.60px;top:279.50px;width:10.60px;height:8.10px;background:#e2edf9;border-radius:1px"></div>
<div class="t" style="left:673.00px;top:280.50px;font-size:8.208px;color:#222;transform:scaleX(0.9259);transform-origin:0 0;-webkit-text-stroke:0.25px #222">8h</div>
<div class="t" style="left:684.80px;top:280.00px;font-size:8.586px;color:#2d3a5a;transform:scaleX(0.9259);transform-origin:0 0;">Logged to ABU-28 <span style="color:#777;font-size:10px;line-height:0;position:relative;top:0.8px">|</span> Build release</div>
<div class="a" style="left:808.70px;top:278.20px;width:136.00px;height:12.30px;background:#f4f5f7;border-radius:2px"></div>
<div class="a" style="left:811.70px;top:279.50px;width:10.60px;height:8.10px;background:#e2edf9;border-radius:1px"></div>
<div class="t" style="left:813.10px;top:280.50px;font-size:8.208px;color:#222;transform:scaleX(0.9259);transform-origin:0 0;-webkit-text-stroke:0.25px #222">8h</div>
<div class="t" style="left:824.90px;top:280.00px;font-size:8.586px;color:#2d3a5a;transform:scaleX(0.9259);transform-origin:0 0;">Logged to ABU-28 <span style="color:#777;font-size:10px;line-height:0;position:relative;top:0.8px">|</span> Build release</div>
<div class="t" style="left:245.00px;top:347.30px;font-size:10.044px;color:#333;transform:scaleX(0.9259);transform-origin:0 0;">MY LOGGED HOURS</div>
<div class="a" style="left:917.00px;top:341.60px;width:75.00px;height:16.10px;background:#7b86a6;border-radius:2.5px"></div>
<svg class="a" style="left:923.3px;top:347.5px" width="9" height="7" viewBox="0 0 9 7"><path d="M1 1.2 L4.4 4.8 L7.8 1.2" stroke="#fff" stroke-width="1.4" fill="none"/></svg>
<div class="t" style="left:936.00px;top:345.40px;font-size:9.396px;color:#fff;transform:scaleX(0.9259);transform-origin:0 0;-webkit-text-stroke:0.3px #fff">Expand view</div>
<div class="a" style="left:244.80px;top:364.00px;width:749.20px;height:0.80px;background:#8ec9c1"></div>
<div class="a" style="left:244.80px;top:364.80px;width:749.20px;height:0.80px;background:#b3b8bb"></div>
<div class="a" style="left:244.80px;top:365.50px;width:139.40px;height:15.50px;background:#6ee7b7"></div>
<div class="t" style="left:114.50px;width:400px;text-align:center;top:368.80px;font-size:9.504px;color:#555;transform:scaleX(0.9259);transform-origin:50% 0;">8h</div>
<div class="a" style="left:384.20px;top:365.50px;width:141.60px;height:15.50px;background:#a8f0a0"></div>
<div class="t" style="left:255.00px;width:400px;text-align:center;top:368.80px;font-size:9.504px;color:#555;transform:scaleX(0.9259);transform-origin:50% 0;">6h</div>
<div class="a" style="left:525.80px;top:365.50px;width:140.60px;height:15.50px;background:#6ee7b7"></div>
<div class="t" style="left:396.10px;width:400px;text-align:center;top:368.80px;font-size:9.504px;color:#555;transform:scaleX(0.9259);transform-origin:50% 0;">8h</div>
<div class="a" style="left:666.40px;top:365.50px;width:140.30px;height:15.50px;background:#6ee7b7"></div>
<div class="t" style="left:536.55px;width:400px;text-align:center;top:368.80px;font-size:9.504px;color:#555;transform:scaleX(0.9259);transform-origin:50% 0;">8h</div>
<div class="a" style="left:806.70px;top:365.50px;width:138.50px;height:15.50px;background:#6ee7b7"></div>
<div class="t" style="left:675.95px;width:400px;text-align:center;top:368.80px;font-size:9.504px;color:#555;transform:scaleX(0.9259);transform-origin:50% 0;">8h</div>
<div class="a" style="left:945.20px;top:365.50px;width:25.00px;height:15.50px;background:#f7f8fa"></div>
<div class="a" style="left:970.20px;top:365.50px;width:23.30px;height:15.50px;background:#f7f8fa"></div>
<div class="a" style="left:383.80px;top:365.50px;width:0.80px;height:15.50px;background:rgba(255,255,255,0.5)"></div>
<div class="a" style="left:525.40px;top:365.50px;width:0.80px;height:15.50px;background:rgba(255,255,255,0.5)"></div>
<div class="a" style="left:666.00px;top:365.50px;width:0.80px;height:15.50px;background:rgba(255,255,255,0.5)"></div>
<div class="a" style="left:806.30px;top:365.50px;width:0.80px;height:15.50px;background:rgba(255,255,255,0.5)"></div>
<div class="a" style="left:969.80px;top:365.50px;width:0.90px;height:15.50px;background:#ebebeb"></div>
<div class="a" style="left:993.10px;top:365.50px;width:0.90px;height:15.50px;background:#ebebeb"></div>
<div class="a" style="left:945.20px;top:380.60px;width:48.80px;height:0.90px;background:#ebebeb"></div>
<div class="t" style="left:245.00px;top:398.80px;font-size:10.044px;color:#333;transform:scaleX(0.9259);transform-origin:0 0;">MY WORKLOG DETAILS</div>
<div class="a" style="left:945.20px;top:393.30px;width:46.80px;height:16.70px;background:#138b5b;border-radius:2.5px"></div>
<svg class="a" style="left:950.8px;top:396.7px" width="10" height="10" viewBox="0 0 10 10"><path d="M0.3 1.2 L5.6 0.2 V9.8 L0.3 8.8Z" fill="#eef7f2"/><rect x="6.4" y="1.3" width="3.3" height="7.4" fill="#d9efe3"/><path d="M6.4 3.3 H9.7 M6.4 5 H9.7 M6.4 6.7 H9.7" stroke="#138b5b" stroke-width="0.5"/><path d="M1.6 3.4 L4.1 6.6 M4.1 3.4 L1.6 6.6" stroke="#138b5b" stroke-width="0.9"/></svg>
<div class="t" style="left:965.80px;top:397.60px;font-size:9.072px;color:#fff;transform:scaleX(0.9259);transform-origin:0 0;-webkit-text-stroke:0.25px #fff">Excel</div>
<div class="a" style="left:244.40px;top:418.20px;width:749.60px;height:18.40px;background:#f3f4f6"></div>
<div class="a" style="left:244.40px;top:418.20px;width:749.60px;height:0.80px;background:#e6e8eb"></div>
<div class="t" style="left:249.60px;top:423.90px;font-size:8.748px;color:#2d3a5a;transform:scaleX(0.9259);transform-origin:0 0;">Status</div>
<div class="t" style="left:333.60px;top:423.90px;font-size:8.748px;color:#2d3a5a;transform:scaleX(0.9259);transform-origin:0 0;">Date</div>
<div class="t" style="left:409.70px;top:423.90px;font-size:8.748px;color:#2d3a5a;transform:scaleX(0.9259);transform-origin:0 0;">Issue</div>
<div class="t" style="left:560.70px;top:423.90px;font-size:8.748px;color:#2d3a5a;transform:scaleX(0.9259);transform-origin:0 0;">Category</div>
<div class="t" style="left:636.60px;top:423.90px;font-size:8.748px;color:#2d3a5a;transform:scaleX(0.9259);transform-origin:0 0;">Time Spent</div>
<div class="t" style="left:696.50px;top:423.90px;font-size:8.748px;color:#2d3a5a;transform:scaleX(0.9259);transform-origin:0 0;">Comment</div>
<div class="t" style="left:721.20px;width:400px;text-align:center;top:423.90px;font-size:8.748px;color:#2d3a5a;transform:scaleX(0.9259);transform-origin:50% 0;">Actions</div>
<div class="a" style="left:244.40px;top:436.20px;width:749.60px;height:0.80px;background:#e6e8eb"></div>
<div class="a" style="left:248.00px;top:440.40px;width:76.60px;height:11.20px;background:#dce7fb;border-radius:6px"></div>
<div class="a" style="left:254.30px;top:444.50px;width:3.00px;height:3.00px;background:#2a7ee6;border-radius:50%"></div>
<div class="t" style="left:259.60px;top:442.60px;font-size:8.316px;color:#2a7ee6;transform:scaleX(0.9259);transform-origin:0 0;">Pending Approval</div>
<div class="t" style="left:333.20px;top:442.20px;font-size:8.964px;color:#333;transform:scaleX(0.9259);transform-origin:0 0;">2025-02-24 18:23</div>
<div class="t" style="left:408.00px;top:442.20px;font-size:8.586px;color:#333;transform:scaleX(0.9259);transform-origin:0 0;">[ABU-42] Test1</div>
<div class="t" style="left:559.20px;top:442.20px;font-size:8.586px;color:#333;transform:scaleX(0.9259);transform-origin:0 0;">Billable</div>
<div class="t" style="left:635.20px;top:442.20px;font-size:8.586px;color:#333;transform:scaleX(0.9259);transform-origin:0 0;">2h</div>
<svg class="a" style="left:877.9px;top:440.60px" width="10" height="10" viewBox="0 0 10 10"><path d="M1 9 L1.4 6.8 L7 1.2 a1 1 0 0 1 1.6 0 l0.2 0.2 a1 1 0 0 1 0 1.5 L3.2 8.6 Z M6.2 2 L8 3.8" stroke="#1a7ae8" stroke-width="1.25" fill="none" stroke-linejoin="round"/></svg>
<div class="t" style="left:891.60px;top:442.20px;font-size:9.828px;color:#1a7ae8;transform:scaleX(0.9259);transform-origin:0 0;-webkit-text-stroke:0.3px #1a7ae8">Edit</div>
<svg class="a" style="left:919.4px;top:440.60px" width="9" height="10" viewBox="0 0 9 10"><path d="M0.6 2.3 H8.4 M3.1 2.3 V1 H5.9 V2.3 M1.6 2.3 L2.1 9.2 H6.9 L7.4 2.3" stroke="#e0323a" stroke-width="1.25" fill="none" stroke-linejoin="round"/><path d="M3.6 4.2 V7.5 M5.4 4.2 V7.5" stroke="#e0323a" stroke-width="0.9"/></svg>
<div class="t" style="left:933.10px;top:441.20px;font-size:9.396px;color:#e0323a;transform:scaleX(0.9259);transform-origin:0 0;-webkit-text-stroke:0.3px #e0323a">Delete</div>
<div class="a" style="left:244.40px;top:454.63px;width:749.60px;height:0.80px;background:#e6e8eb"></div>
<div class="a" style="left:248.00px;top:458.83px;width:76.60px;height:11.20px;background:#dce7fb;border-radius:6px"></div>
<div class="a" style="left:254.30px;top:462.93px;width:3.00px;height:3.00px;background:#2a7ee6;border-radius:50%"></div>
<div class="t" style="left:259.60px;top:461.03px;font-size:8.316px;color:#2a7ee6;transform:scaleX(0.9259);transform-origin:0 0;">Pending Approval</div>
<div class="t" style="left:333.20px;top:460.63px;font-size:8.964px;color:#333;transform:scaleX(0.9259);transform-origin:0 0;">2025-02-24 18:25</div>
<div class="t" style="left:408.00px;top:460.63px;font-size:8.586px;color:#333;transform:scaleX(0.9259);transform-origin:0 0;">[GFI-9] Refactor old code</div>
<div class="t" style="left:559.20px;top:460.63px;font-size:8.586px;color:#333;transform:scaleX(0.9259);transform-origin:0 0;">Billable</div>
<div class="t" style="left:635.20px;top:460.63px;font-size:8.586px;color:#333;transform:scaleX(0.9259);transform-origin:0 0;">2h</div>
<svg class="a" style="left:877.9px;top:459.03px" width="10" height="10" viewBox="0 0 10 10"><path d="M1 9 L1.4 6.8 L7 1.2 a1 1 0 0 1 1.6 0 l0.2 0.2 a1 1 0 0 1 0 1.5 L3.2 8.6 Z M6.2 2 L8 3.8" stroke="#1a7ae8" stroke-width="1.25" fill="none" stroke-linejoin="round"/></svg>
<div class="t" style="left:891.60px;top:460.63px;font-size:9.828px;color:#1a7ae8;transform:scaleX(0.9259);transform-origin:0 0;-webkit-text-stroke:0.3px #1a7ae8">Edit</div>
<svg class="a" style="left:919.4px;top:459.03px" width="9" height="10" viewBox="0 0 9 10"><path d="M0.6 2.3 H8.4 M3.1 2.3 V1 H5.9 V2.3 M1.6 2.3 L2.1 9.2 H6.9 L7.4 2.3" stroke="#e0323a" stroke-width="1.25" fill="none" stroke-linejoin="round"/><path d="M3.6 4.2 V7.5 M5.4 4.2 V7.5" stroke="#e0323a" stroke-width="0.9"/></svg>
<div class="t" style="left:933.10px;top:459.63px;font-size:9.396px;color:#e0323a;transform:scaleX(0.9259);transform-origin:0 0;-webkit-text-stroke:0.3px #e0323a">Delete</div>
<div class="a" style="left:244.40px;top:473.06px;width:749.60px;height:0.80px;background:#e6e8eb"></div>
<div class="a" style="left:248.00px;top:477.26px;width:76.60px;height:11.20px;background:#dce7fb;border-radius:6px"></div>
<div class="a" style="left:254.30px;top:481.36px;width:3.00px;height:3.00px;background:#2a7ee6;border-radius:50%"></div>
<div class="t" style="left:259.60px;top:479.46px;font-size:8.316px;color:#2a7ee6;transform:scaleX(0.9259);transform-origin:0 0;">Pending Approval</div>
<div class="t" style="left:333.20px;top:479.06px;font-size:8.964px;color:#333;transform:scaleX(0.9259);transform-origin:0 0;">2025-02-24 18:25</div>
<div class="t" style="left:408.00px;top:479.06px;font-size:8.586px;color:#333;transform:scaleX(0.9259);transform-origin:0 0;">[ABU-38] Sorting bug</div>
<div class="t" style="left:559.20px;top:479.06px;font-size:8.586px;color:#333;transform:scaleX(0.9259);transform-origin:0 0;">Billable</div>
<div class="t" style="left:635.20px;top:479.06px;font-size:8.586px;color:#333;transform:scaleX(0.9259);transform-origin:0 0;">4h</div>
<svg class="a" style="left:877.9px;top:477.46px" width="10" height="10" viewBox="0 0 10 10"><path d="M1 9 L1.4 6.8 L7 1.2 a1 1 0 0 1 1.6 0 l0.2 0.2 a1 1 0 0 1 0 1.5 L3.2 8.6 Z M6.2 2 L8 3.8" stroke="#1a7ae8" stroke-width="1.25" fill="none" stroke-linejoin="round"/></svg>
<div class="t" style="left:891.60px;top:479.06px;font-size:9.828px;color:#1a7ae8;transform:scaleX(0.9259);transform-origin:0 0;-webkit-text-stroke:0.3px #1a7ae8">Edit</div>
<svg class="a" style="left:919.4px;top:477.46px" width="9" height="10" viewBox="0 0 9 10"><path d="M0.6 2.3 H8.4 M3.1 2.3 V1 H5.9 V2.3 M1.6 2.3 L2.1 9.2 H6.9 L7.4 2.3" stroke="#e0323a" stroke-width="1.25" fill="none" stroke-linejoin="round"/><path d="M3.6 4.2 V7.5 M5.4 4.2 V7.5" stroke="#e0323a" stroke-width="0.9"/></svg>
<div class="t" style="left:933.10px;top:478.06px;font-size:9.396px;color:#e0323a;transform:scaleX(0.9259);transform-origin:0 0;-webkit-text-stroke:0.3px #e0323a">Delete</div>
<div class="a" style="left:244.40px;top:491.49px;width:749.60px;height:0.80px;background:#e6e8eb"></div>
<div class="a" style="left:248.00px;top:495.69px;width:76.60px;height:11.20px;background:#dce7fb;border-radius:6px"></div>
<div class="a" style="left:254.30px;top:499.79px;width:3.00px;height:3.00px;background:#2a7ee6;border-radius:50%"></div>
<div class="t" style="left:259.60px;top:497.89px;font-size:8.316px;color:#2a7ee6;transform:scaleX(0.9259);transform-origin:0 0;">Pending Approval</div>
<div class="t" style="left:333.20px;top:497.49px;font-size:8.964px;color:#333;transform:scaleX(0.9259);transform-origin:0 0;">2025-02-25 18:25</div>
<div class="t" style="left:408.00px;top:497.49px;font-size:8.586px;color:#333;transform:scaleX(0.9259);transform-origin:0 0;">[ABU-38] Sorting bug</div>
<div class="t" style="left:559.20px;top:497.49px;font-size:8.586px;color:#333;transform:scaleX(0.9259);transform-origin:0 0;">Billable</div>
<div class="t" style="left:635.20px;top:497.49px;font-size:8.586px;color:#333;transform:scaleX(0.9259);transform-origin:0 0;">2h</div>
<svg class="a" style="left:877.9px;top:495.89px" width="10" height="10" viewBox="0 0 10 10"><path d="M1 9 L1.4 6.8 L7 1.2 a1 1 0 0 1 1.6 0 l0.2 0.2 a1 1 0 0 1 0 1.5 L3.2 8.6 Z M6.2 2 L8 3.8" stroke="#1a7ae8" stroke-width="1.25" fill="none" stroke-linejoin="round"/></svg>
<div class="t" style="left:891.60px;top:497.49px;font-size:9.828px;color:#1a7ae8;transform:scaleX(0.9259);transform-origin:0 0;-webkit-text-stroke:0.3px #1a7ae8">Edit</div>
<svg class="a" style="left:919.4px;top:495.89px" width="9" height="10" viewBox="0 0 9 10"><path d="M0.6 2.3 H8.4 M3.1 2.3 V1 H5.9 V2.3 M1.6 2.3 L2.1 9.2 H6.9 L7.4 2.3" stroke="#e0323a" stroke-width="1.25" fill="none" stroke-linejoin="round"/><path d="M3.6 4.2 V7.5 M5.4 4.2 V7.5" stroke="#e0323a" stroke-width="0.9"/></svg>
<div class="t" style="left:933.10px;top:496.49px;font-size:9.396px;color:#e0323a;transform:scaleX(0.9259);transform-origin:0 0;-webkit-text-stroke:0.3px #e0323a">Delete</div>
<div class="a" style="left:244.40px;top:509.92px;width:749.60px;height:0.80px;background:#e6e8eb"></div>
<div class="a" style="left:248.00px;top:514.12px;width:76.60px;height:11.20px;background:#dce7fb;border-radius:6px"></div>
<div class="a" style="left:254.30px;top:518.22px;width:3.00px;height:3.00px;background:#2a7ee6;border-radius:50%"></div>
<div class="t" style="left:259.60px;top:516.32px;font-size:8.316px;color:#2a7ee6;transform:scaleX(0.9259);transform-origin:0 0;">Pending Approval</div>
<div class="t" style="left:333.20px;top:515.92px;font-size:8.964px;color:#333;transform:scaleX(0.9259);transform-origin:0 0;">2025-02-25 18:31</div>
<div class="t" style="left:408.00px;top:515.92px;font-size:8.586px;color:#333;transform:scaleX(0.9259);transform-origin:0 0;">[GFI-9] Refactor old code</div>
<div class="t" style="left:559.20px;top:515.92px;font-size:8.586px;color:#333;transform:scaleX(0.9259);transform-origin:0 0;">Billable</div>
<div class="t" style="left:635.20px;top:515.92px;font-size:8.586px;color:#333;transform:scaleX(0.9259);transform-origin:0 0;">4h</div>
<svg class="a" style="left:877.9px;top:514.32px" width="10" height="10" viewBox="0 0 10 10"><path d="M1 9 L1.4 6.8 L7 1.2 a1 1 0 0 1 1.6 0 l0.2 0.2 a1 1 0 0 1 0 1.5 L3.2 8.6 Z M6.2 2 L8 3.8" stroke="#1a7ae8" stroke-width="1.25" fill="none" stroke-linejoin="round"/></svg>
<div class="t" style="left:891.60px;top:515.92px;font-size:9.828px;color:#1a7ae8;transform:scaleX(0.9259);transform-origin:0 0;-webkit-text-stroke:0.3px #1a7ae8">Edit</div>
<svg class="a" style="left:919.4px;top:514.32px" width="9" height="10" viewBox="0 0 9 10"><path d="M0.6 2.3 H8.4 M3.1 2.3 V1 H5.9 V2.3 M1.6 2.3 L2.1 9.2 H6.9 L7.4 2.3" stroke="#e0323a" stroke-width="1.25" fill="none" stroke-linejoin="round"/><path d="M3.6 4.2 V7.5 M5.4 4.2 V7.5" stroke="#e0323a" stroke-width="0.9"/></svg>
<div class="t" style="left:933.10px;top:514.92px;font-size:9.396px;color:#e0323a;transform:scaleX(0.9259);transform-origin:0 0;-webkit-text-stroke:0.3px #e0323a">Delete</div>
<div class="a" style="left:244.40px;top:528.35px;width:749.60px;height:0.80px;background:#e6e8eb"></div>
<div class="a" style="left:248.00px;top:532.55px;width:76.60px;height:11.20px;background:#dce7fb;border-radius:6px"></div>
<div class="a" style="left:254.30px;top:536.65px;width:3.00px;height:3.00px;background:#2a7ee6;border-radius:50%"></div>
<div class="t" style="left:259.60px;top:534.75px;font-size:8.316px;color:#2a7ee6;transform:scaleX(0.9259);transform-origin:0 0;">Pending Approval</div>
<div class="t" style="left:333.20px;top:534.35px;font-size:8.964px;color:#333;transform:scaleX(0.9259);transform-origin:0 0;">2025-02-26 10:31</div>
<div class="t" style="left:408.00px;top:534.35px;font-size:8.586px;color:#333;transform:scaleX(0.9259);transform-origin:0 0;">[ABU-28] Build release</div>
<div class="t" style="left:559.20px;top:534.35px;font-size:8.586px;color:#333;transform:scaleX(0.9259);transform-origin:0 0;">Billable</div>
<div class="t" style="left:635.20px;top:534.35px;font-size:8.586px;color:#333;transform:scaleX(0.9259);transform-origin:0 0;">8h</div>
<svg class="a" style="left:877.9px;top:532.75px" width="10" height="10" viewBox="0 0 10 10"><path d="M1 9 L1.4 6.8 L7 1.2 a1 1 0 0 1 1.6 0 l0.2 0.2 a1 1 0 0 1 0 1.5 L3.2 8.6 Z M6.2 2 L8 3.8" stroke="#1a7ae8" stroke-width="1.25" fill="none" stroke-linejoin="round"/></svg>
<div class="t" style="left:891.60px;top:534.35px;font-size:9.828px;color:#1a7ae8;transform:scaleX(0.9259);transform-origin:0 0;-webkit-text-stroke:0.3px #1a7ae8">Edit</div>
<svg class="a" style="left:919.4px;top:532.75px" width="9" height="10" viewBox="0 0 9 10"><path d="M0.6 2.3 H8.4 M3.1 2.3 V1 H5.9 V2.3 M1.6 2.3 L2.1 9.2 H6.9 L7.4 2.3" stroke="#e0323a" stroke-width="1.25" fill="none" stroke-linejoin="round"/><path d="M3.6 4.2 V7.5 M5.4 4.2 V7.5" stroke="#e0323a" stroke-width="0.9"/></svg>
<div class="t" style="left:933.10px;top:533.35px;font-size:9.396px;color:#e0323a;transform:scaleX(0.9259);transform-origin:0 0;-webkit-text-stroke:0.3px #e0323a">Delete</div>
<div class="a" style="left:244.40px;top:546.78px;width:749.60px;height:0.80px;background:#e6e8eb"></div>
<div class="a" style="left:248.00px;top:550.98px;width:76.60px;height:11.20px;background:#dce7fb;border-radius:6px"></div>
<div class="a" style="left:254.30px;top:555.08px;width:3.00px;height:3.00px;background:#2a7ee6;border-radius:50%"></div>
<div class="t" style="left:259.60px;top:553.18px;font-size:8.316px;color:#2a7ee6;transform:scaleX(0.9259);transform-origin:0 0;">Pending Approval</div>
<div class="t" style="left:333.20px;top:552.78px;font-size:8.964px;color:#333;transform:scaleX(0.9259);transform-origin:0 0;">2025-02-27 10:31</div>
<div class="t" style="left:408.00px;top:552.78px;font-size:8.586px;color:#333;transform:scaleX(0.9259);transform-origin:0 0;">[ABU-28] Build release</div>
<div class="t" style="left:559.20px;top:552.78px;font-size:8.586px;color:#333;transform:scaleX(0.9259);transform-origin:0 0;">Billable</div>
<div class="t" style="left:635.20px;top:552.78px;font-size:8.586px;color:#333;transform:scaleX(0.9259);transform-origin:0 0;">8h</div>
<svg class="a" style="left:877.9px;top:551.18px" width="10" height="10" viewBox="0 0 10 10"><path d="M1 9 L1.4 6.8 L7 1.2 a1 1 0 0 1 1.6 0 l0.2 0.2 a1 1 0 0 1 0 1.5 L3.2 8.6 Z M6.2 2 L8 3.8" stroke="#1a7ae8" stroke-width="1.25" fill="none" stroke-linejoin="round"/></svg>
<div class="t" style="left:891.60px;top:552.78px;font-size:9.828px;color:#1a7ae8;transform:scaleX(0.9259);transform-origin:0 0;-webkit-text-stroke:0.3px #1a7ae8">Edit</div>
<svg class="a" style="left:919.4px;top:551.18px" width="9" height="10" viewBox="0 0 9 10"><path d="M0.6 2.3 H8.4 M3.1 2.3 V1 H5.9 V2.3 M1.6 2.3 L2.1 9.2 H6.9 L7.4 2.3" stroke="#e0323a" stroke-width="1.25" fill="none" stroke-linejoin="round"/><path d="M3.6 4.2 V7.5 M5.4 4.2 V7.5" stroke="#e0323a" stroke-width="0.9"/></svg>
<div class="t" style="left:933.10px;top:551.78px;font-size:9.396px;color:#e0323a;transform:scaleX(0.9259);transform-origin:0 0;-webkit-text-stroke:0.3px #e0323a">Delete</div>
<div class="a" style="left:244.40px;top:565.21px;width:749.60px;height:0.80px;background:#e6e8eb"></div>
<div class="a" style="left:244.00px;top:418.20px;width:0.80px;height:140.80px;background:#e6e8eb"></div>
<div class="a" style="left:328.00px;top:418.20px;width:0.80px;height:140.80px;background:#e6e8eb"></div>
<div class="a" style="left:404.10px;top:418.20px;width:0.80px;height:140.80px;background:#e6e8eb"></div>
<div class="a" style="left:555.10px;top:418.20px;width:0.80px;height:140.80px;background:#e6e8eb"></div>
<div class="a" style="left:631.00px;top:418.20px;width:0.80px;height:140.80px;background:#e6e8eb"></div>
<div class="a" style="left:690.90px;top:418.20px;width:0.80px;height:140.80px;background:#e6e8eb"></div>
<div class="a" style="left:842.80px;top:418.20px;width:0.80px;height:140.80px;background:#e6e8eb"></div>
<div class="a" style="left:993.60px;top:418.20px;width:0.80px;height:140.80px;background:#e6e8eb"></div>
<div class="a" style="left:994.20px;top:31.30px;width:3.80px;height:512.00px;background:#c2c2c2;border-radius:2px"></div>
</div></body></html>
